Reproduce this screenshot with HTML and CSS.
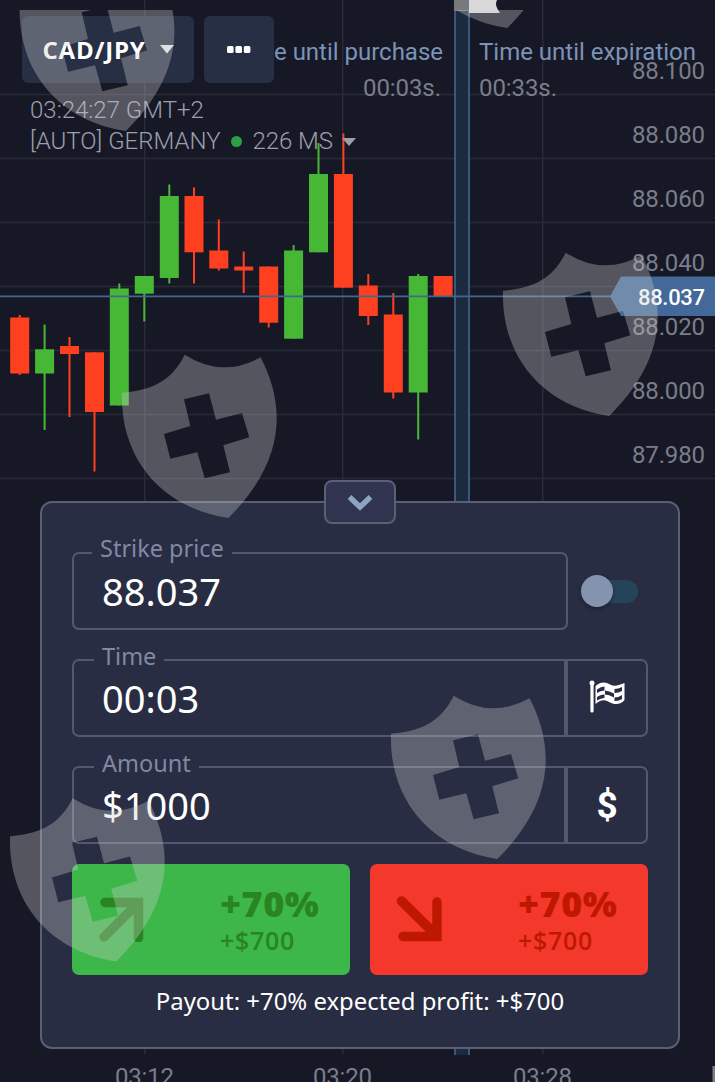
FILE: index.html
```html
<!DOCTYPE html>
<html lang="en">
<head>
    <meta charset="UTF-8">
    <meta name="viewport" content="width=device-width, initial-scale=1.0">
    <title>CAD/JPY</title>
    <link rel="stylesheet" href="styles.css">
</head>
<body>

    <div class="screen">

        <!-- chart -->
        <svg class="chart" viewBox="0 0 715 1082" width="715" height="1082">
            <g class="grid">
                <path d="M0 94.5H715M0 158.5H715M0 222.5H715M0 286.5H715M0 350.5H715M0 414.5H715M0 478.5H715"/>
                <path d="M144.7 0V1054M342.8 0V1054M542.8 0V1054"/>
            </g>
            <rect class="band" x="455" y="0" width="14" height="1055"/>
            <path class="band-line" d="M455 0V1055M469 0V1055"/>
            <rect class="band-top" x="454" y="0" width="15" height="11"/>
            <path class="flag" d="M469 0H497Q494 5 500 13H469Z"/>

            <g id="candles"></g>

            <path class="price-line" d="M0 296.3H612"/>
            <g class="axis">
                <text x="632" y="78.500" textLength="73">88.100</text>
                <text x="632" y="142.500" textLength="73">88.080</text>
                <text x="632" y="206.500" textLength="73">88.060</text>
                <text x="632" y="270.500" textLength="73">88.040</text>
                <text x="632" y="334.500" textLength="73">88.020</text>
                <text x="632" y="398.500" textLength="73">88.000</text>
                <text x="632" y="462.500" textLength="73">87.980</text>
                <text x="115" y="1085" textLength="59">03:12</text>
                <text x="313" y="1085" textLength="59">03:20</text>
                <text x="513" y="1085" textLength="59">03:28</text>
                <text x="363" y="95.500" textLength="78">00:03s.</text>
                <text x="479" y="95.500" textLength="78">00:33s.</text>
                <rect x="712.500" y="1066" width="3" height="16"/>
            </g>
            <g class="timer">
                <text x="274" y="59.5" textLength="169">e until purchase</text>
                <text x="479" y="59.5" textLength="217">Time until expiration</text>
            </g>
            <path class="price-tag" d="M610 296.5L621 276.5H715V316H621Z"/>
            <text class="price-now" x="638" y="305" textLength="67">88.037</text>
        </svg>

        <div class="top">
            <div class="toolbar">
                <button class="tool pair">CAD/JPY
                    <svg width="14" height="9" viewBox="0 0 14 9"><path d="M0 0H14L7 8.5Z" fill="#e8eaee"/></svg>
                </button>
                <button class="tool more">
                    <svg width="24" height="7" viewBox="0 0 24 7" fill="#fff"><rect width="6.6" height="7" rx="1.5"/><rect x="8.4" width="6.6" height="7" rx="1.5"/><rect x="16.8" width="6.6" height="7" rx="1.5"/></svg>
                </button>
            </div>
            <div class="status">
                <div class="clock">03:24:27 GMT+2</div>
                <div class="server">
                    <span class="region">[AUTO] GERMANY</span>
                    <span class="dot"></span>
                    <span class="ping">226 MS</span>
                    <svg width="14" height="8" viewBox="0 0 14 8"><path d="M0 0H14L7 8Z" fill="#9b9eaa"/></svg>
                </div>
            </div>
        </div>

        <!-- order form -->
        <div class="panel">
            <button class="handle">
                <svg width="26" height="17" viewBox="0 0 26 17"><path d="M2.5 3L13 13L23.5 3" fill="none" stroke="#8ca4c0" stroke-width="5.5"/></svg>
            </button>

            <div class="row">
                <div class="field strike">
                    <span class="label">Strike price</span>
                    <span class="value">88.037</span>
                </div>
                <div class="toggle"><span class="knob"></span></div>
            </div>

            <div class="field">
                <span class="label">Time</span>
                <span class="value">00:03</span>
                <span class="unit">
                    <svg width="36" height="33" viewBox="0 0 36 33">
                        <circle cx="3" cy="3" r="2.5" fill="#fff"/>
                        <path d="M3 3V31" stroke="#fff" stroke-width="3.2" stroke-linecap="round"/>
                        <path d="M6.500 6C12 1 17 2 21 4.500C26 7 30 5 35.500 3V20C32 25 25 25 20 22C15 19 11 20 6.500 24Z" fill="#fff"/>
                        <g fill="#282d43">
                            <path d="M8 9.500Q12 6.500 15.500 6.500V10.500Q11.500 10.500 8 13Z"/>
                            <path d="M16 10.500Q20 11 25 13.500V17.500Q20 14.500 16 14.500Z"/>
                            <path d="M25.500 9Q29.500 9 33 7V11Q29.500 13 25.500 13Z"/>
                            <path d="M8 17Q12 14 15.500 14.500V18Q11.500 18 8 20.500Z"/>
                            <path d="M25.500 17.500Q29.500 17.500 33 15V19Q29.500 21.500 25.500 21Z"/>
                        </g>
                    </svg>
                </span>
            </div>

            <div class="field">
                <span class="label">Amount</span>
                <span class="value">$1000</span>
                <span class="unit dollar">$</span>
            </div>

            <div class="actions">
                <button class="trade up">
                    <svg width="46" height="46" viewBox="0 0 46 46"><path d="M6 6.500H39.500V42M39 7L5 41" fill="none" stroke="currentColor" stroke-width="9.500" stroke-linecap="round"/></svg>
                    <span class="profit"><b>+70%</b><i>+$700</i></span>
                </button>
                <button class="trade down">
                    <svg width="46" height="46" viewBox="0 0 46 46"><path d="M6 40.500H40V6M4.500 5L38 38" fill="none" stroke="currentColor" stroke-width="9.500" stroke-linecap="round"/></svg>
                    <span class="profit"><b>+70%</b><i>+$700</i></span>
                </button>
            </div>

            <p class="payout">Payout: +70% expected profit: +$700</p>
        </div>

        <!-- shields lie over everything -->
        <svg class="shields" viewBox="0 0 715 1082" width="715" height="1082">
            <defs>
                <path id="shield" fill-rule="evenodd" d="M62.700 .7Q100 24.600 138.500 3.300C161 46 168 103 106.300 164C40 154 -2 105 0 38.700C36 36 52 22 62.700 .7Z
                    M62 45.300L87 39.300L94 65.700L120 59L127.300 83.300L101.300 91.300L108 118.300L82.700 124.300L75.300 98.300L48.300 104.700L42 80L68.300 72Z"/>
                <clipPath id="under"><rect y="10" width="715" height="1072"/></clipPath>
            </defs>
            <g clip-path="url(#under)">
                <use href="#shield" x="19.700" y="-33"/>
                <use href="#shield" x="401" y="-136"/>
                <use href="#shield" x="122" y="354"/>
                <use href="#shield" x="503" y="252"/>
                <use href="#shield" x="391" y="695"/>
                <use href="#shield" x="10" y="797.500"/>
            </g>
        </svg>
    </div>

    <script>
        // x, high, top, bottom, low, color
        const candles = [
            [19.7, 315, 317.5, 373.5, 375, 'red'],
            [44.6, 324.5, 349.3, 373.5, 430, 'green'],
            [69.5, 337, 346, 354, 417, 'red'],
            [94.5, 352.3, 352.3, 412, 471.5, 'red'],
            [119.3, 283.5, 288.5, 405.5, 405.5, 'green'],
            [144.3, 276, 276, 293.7, 321.5, 'green'],
            [169.3, 184.5, 196, 278, 283.5, 'green'],
            [194, 187.5, 196, 252.3, 283.5, 'red'],
            [218.8, 219.5, 250.5, 268.5, 270.5, 'red'],
            [243.7, 251.5, 266.5, 270.5, 293, 'red'],
            [268.7, 266.5, 266.5, 322.7, 327.5, 'red'],
            [293.6, 245, 250.5, 338.7, 338.7, 'green'],
            [318.5, 143, 174, 252.3, 252.3, 'green'],
            [343.4, 133.5, 174, 287.7, 287.7, 'red'],
            [368.3, 274, 285.5, 316, 325, 'red'],
            [393.3, 293, 314.5, 392.5, 398.5, 'red'],
            [418.2, 274, 276, 392.5, 439.5, 'green'],
            [443.1, 276, 276, 296.7, 296.7, 'red']
        ];

        document.getElementById('candles').innerHTML = candles.map(([x, high, top, bottom, low, color]) =>
            `<g class="${color}"><rect x="${x - 1}" y="${high}" width="2" height="${low - high}"/>` +
            `<rect x="${x - 9.5}" y="${top}" width="19" height="${bottom - top}"/></g>`
        ).join('');
    </script>
</body>
</html>
```

FILE: styles.css
```css
body {
    margin: 0;
    background: #171826;
    font-family: "Noto Sans", sans-serif;
}
button {
    border: none;
    padding: 0;
    font-family: inherit;
    cursor: pointer;
}
.screen {
    position: relative;
    width: 715px;
    height: 1082px;
    overflow: hidden;
}

/* chart */
.chart,
.shields {
    position: absolute;
    top: 0;
    left: 0;
}
.shields {
    fill: #d0d0d0;
    opacity: 0.33;
    pointer-events: none;
}
.grid path {
    stroke: #292b39;
    stroke-width: 1.5;
}
.band {
    fill: #1c2a40;
}
.band-line {
    stroke: #3f6289;
    stroke-width: 1.7;
}
.band-top {
    fill: #77797d;
}
.flag {
    fill: #d9d9dc;
}
.green {
    fill: #46b835;
}
.red {
    fill: #ff4020;
}
.price-line {
    stroke: #41688f;
    stroke-width: 1.8;
}
.axis,
.timer,
.price-now {
    font-family: Roboto, sans-serif;
    font-size: 24px;
}
.axis {
    fill: #7a7d8a;
}
.timer {
    fill: #7b93b7;
}
.price-tag {
    fill: #426999;
}
.price-now {
    fill: #fff;
    font-size: 22px;
    font-weight: 500;
}

/* header */
.top {
    position: relative;
    height: 501px;
    padding: 15.5px 0 0 22px;
    box-sizing: border-box;
}
.toolbar {
    display: flex;
    gap: 10px;
}
.tool {
    display: flex;
    align-items: center;
    justify-content: center;
    height: 67.5px;
    border-radius: 6px;
    background: #262f43;
    color: #fff;
}
.pair {
    width: 172px;
    gap: 14px;
    font-family: "Open Sans", sans-serif;
    font-size: 24px;
    font-weight: 700;
    letter-spacing: 0.8px;
}
.more {
    width: 70px;
}
.status {
    padding: 12px 0 0 8px;
    font-family: Roboto, sans-serif;
    font-size: 24px;
    font-weight: 300;
    line-height: 31px;
    color: #9c9fad;
}
.server {
    display: flex;
    align-items: center;
}
.dot {
    width: 11px;
    height: 11px;
    margin: 0 11px 0 10px;
    border-radius: 50%;
    background: #2c9f45;
}
.ping {
    margin-right: 9px;
    letter-spacing: -0.1px;
}

/* order form */
.panel {
    position: relative;
    width: 640px;
    height: 548px;
    margin-left: 40px;
    padding: 49px 30px 0;
    box-sizing: border-box;
    border: 2px solid #5b5f73;
    border-radius: 12px;
    background: #282d43;
}
.handle {
    position: absolute;
    top: -23px;
    left: 282px;
    display: flex;
    align-items: center;
    justify-content: center;
    width: 72px;
    height: 44px;
    border: 2px solid #5b5f76;
    border-radius: 8px;
    background: #30344e;
}
.row {
    display: flex;
    align-items: center;
    gap: 13px;
}
.field {
    position: relative;
    display: flex;
    height: 78px;
    margin-bottom: 29px;
    box-sizing: border-box;
    border: 2px solid #54586f;
    border-radius: 7px;
}
.strike {
    width: 496px;
}
.label {
    position: absolute;
    top: -21px;
    left: 20px;
    padding: 0 8px;
    background: #282d43;
    color: #8089a4;
    font-size: 23.5px;
    line-height: 33px;
}
.strike .label {
    top: -22px;
    left: 18px;
}
.value {
    flex: 1;
    padding-left: 28px;
    color: #fff;
    font-size: 38px;
    line-height: 74px;
}
.unit {
    display: flex;
    align-items: center;
    justify-content: center;
    width: 78px;
    border-left: 4px solid #54586f;
}
.unit svg {
    margin-top: -3px;
}
.dollar {
    color: #fff;
    font-family: Roboto, sans-serif;
    font-size: 37px;
    font-weight: 700;
}
.toggle {
    width: 51px;
    height: 23px;
    margin: -29px 0 0 6px;
    border-radius: 12px;
    background: #25445a;
}
.knob {
    display: block;
    width: 32px;
    height: 32px;
    margin: -5px 0 0 -6px;
    border-radius: 50%;
    background: #8594ae;
    box-shadow: 0 2px 4px rgba(0, 0, 0, 0.3);
}
.actions {
    display: flex;
    gap: 20px;
    margin-top: -9.5px;
}
.trade {
    display: flex;
    align-items: center;
    width: 278px;
    height: 111px;
    padding-left: 27px;
    border-radius: 7px;
    text-align: left;
}
.up {
    background: #3db74a;
    color: #28851f;
}
.down {
    background: #f5382c;
    color: #bf1800;
}
.profit {
    margin-left: 75px;
    font-family: "Open Sans", sans-serif;
}
.profit b,
.profit i {
    display: block;
    font-style: normal;
}
.profit b {
    font-size: 36px;
    font-weight: 800;
    line-height: 42px;
    letter-spacing: 0.5px;
}
.profit i {
    font-size: 25px;
    font-weight: 600;
    line-height: 30px;
    letter-spacing: 0.7px;
}
.payout {
    margin: 9px 0 0;
    color: #fff;
    font-size: 23.9px;
    line-height: 33px;
    text-align: center;
    white-space: nowrap;
}
```
